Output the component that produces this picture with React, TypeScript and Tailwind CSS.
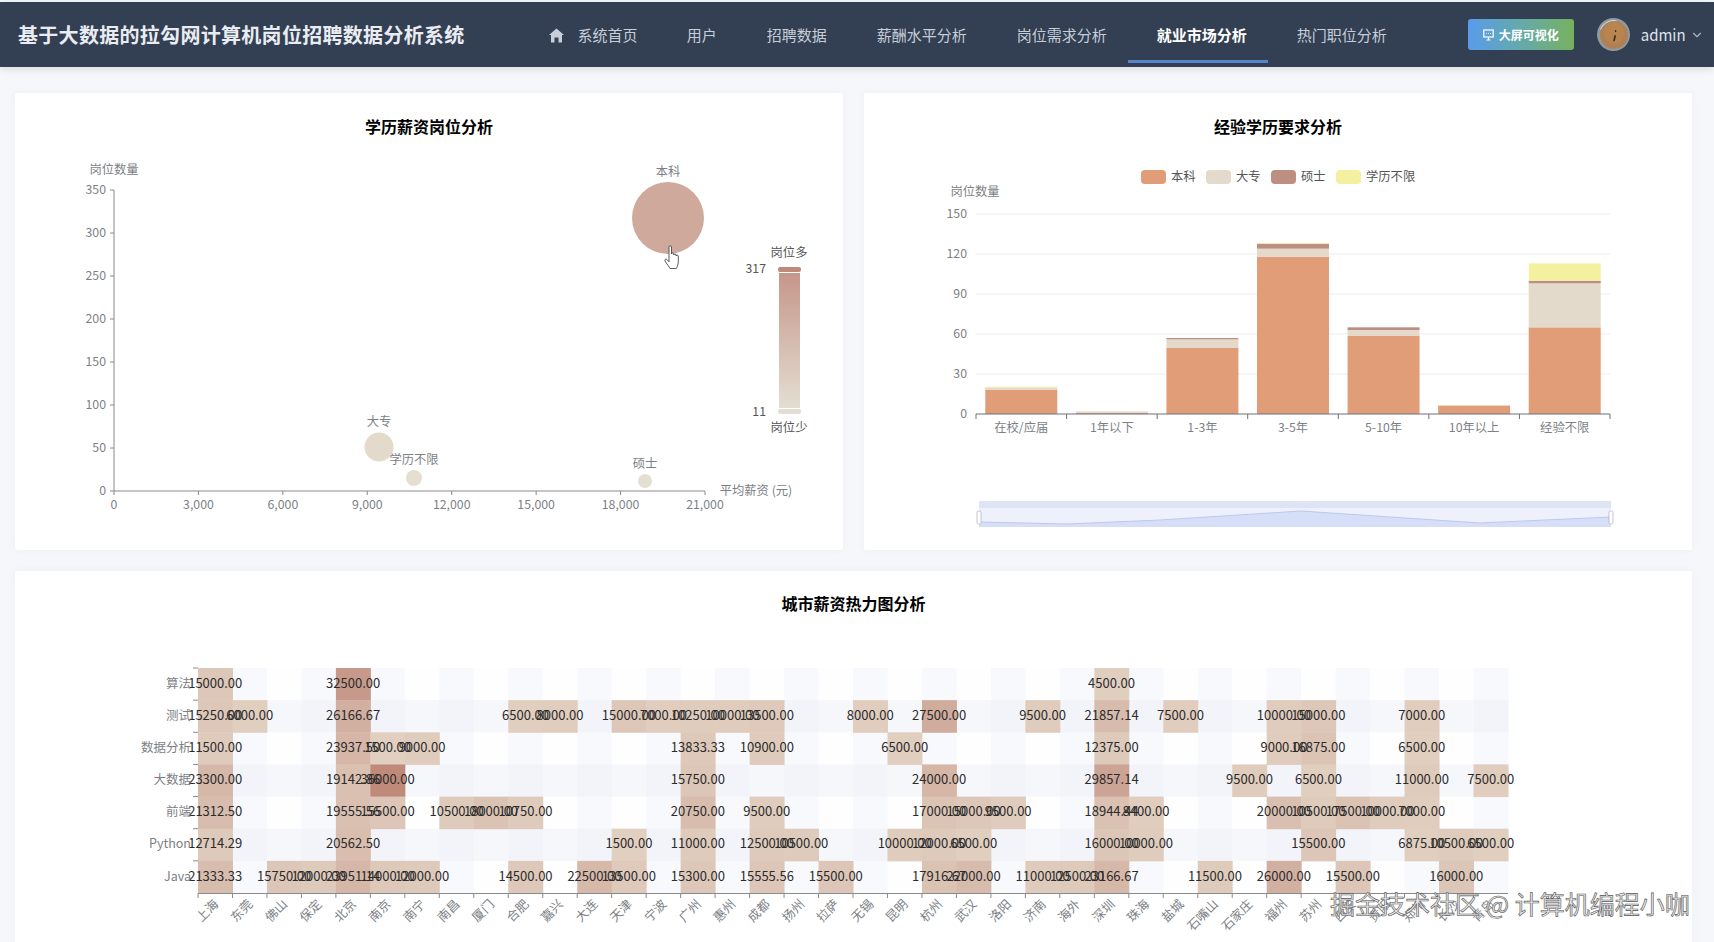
import React from 'react';
import { ChevronDown } from 'lucide-react';

const navItems = ['用户', '招聘数据', '薪酬水平分析', '岗位需求分析', '就业市场分析', '热门职位分析'];

const axisText = '#7d7f86';

const cities = ['上海','东莞','佛山','保定','北京','南京','南宁','南昌','厦门','合肥','嘉兴','大连','天津','宁波','广州','惠州','成都','扬州','拉萨','无锡','昆明','杭州','武汉','洛阳','济南','海外','深圳','珠海','盐城','石嘴山','石家庄','福州','苏州','西安','贵阳','郑州','长沙','青岛'];
const jobs = ['算法','测试','数据分析','大数据','前端','Python','Java'];

// row -> [column, salary]
const heat: [number, number][][] = [
  [[0,15000],[4,32500],[26,4500]],
  [[0,15250],[1,6000],[4,26166.67],[9,6500],[10,8000],[12,15000],[13,7000],[14,10250],[15,10000],[16,13500],[19,8000],[21,27500],[24,9500],[26,21857.14],[28,7500],[31,10000],[32,15000],[35,7000]],
  [[0,11500],[4,23937.5],[5,1500],[6,9000],[14,13833.33],[16,10900],[20,6500],[26,12375],[31,9000],[32,16875],[35,6500]],
  [[0,23300],[4,19142.86],[5,36000],[14,15750],[21,24000],[26,29857.14],[30,9500],[32,6500],[35,11000],[37,7500]],
  [[0,21312.5],[4,19555.56],[5,15500],[7,10500],[8,18000],[9,10750],[14,20750],[16,9500],[21,17000],[22,15000],[23,9500],[26,18944.44],[27,8400],[31,20000],[32,10500],[33,17500],[34,10000],[35,7000]],
  [[0,12714.29],[4,20562.5],[12,1500],[14,11000],[16,12500],[17,10500],[20,10000],[21,12000],[22,6500],[26,16000],[27,10000],[32,15500],[35,6875],[36,10500],[37,6500]],
  [[0,21333.33],[2,15750],[3,12000],[4,23951.14],[5,14000],[6,12000],[9,14500],[11,22500],[12,13500],[14,15300],[16,15555.56],[18,15500],[21,17916.67],[22,22000],[24,11000],[25,12500],[26,23166.67],[29,11500],[31,26000],[33,15500],[36,16000]],
];

const stacks = [
  { name: '在校/应届', v: [18, 2, 0, 0.5] },
  { name: '1年以下', v: [1, 1, 0, 0] },
  { name: '1-3年', v: [49.5, 6.5, 1, 0] },
  { name: '3-5年', v: [118, 6, 3.7, 0.6] },
  { name: '5-10年', v: [58.5, 4.5, 2, 0] },
  { name: '10年以上', v: [6, 0.8, 0, 0] },
  { name: '经验不限', v: [65, 33, 2, 13] },
];
const stackColors = ['#e09d77', '#e3dacb', '#bc8f82', '#f3f0a0'];

// low salaries stay pale, only the very top goes dark
const heatColor = (v: number) => {
  const t = 0.12 + 0.88 * Math.pow(v / 36000, 2.5);
  const mix = (a: number, b: number) => Math.round(a + (b - a) * t);
  return `rgb(${mix(229, 192)},${mix(216, 138)},${mix(201, 123)})`;
};

const emptyColor = (r: number, c: number) => {
  if (r % 2 && c % 2) return '#f2f4fa';
  if (r % 2) return '#f6f7fb';
  if (c % 2) return '#f7f9fd';
  return '#fefefe';
};

const BubbleChart = () => {
  const xTicks = [0, 3000, 6000, 9000, 12000, 15000, 18000, 21000];
  const yTicks = [0, 50, 100, 150, 200, 250, 300, 350];
  const x = (v: number) => 114 + (v / 21000) * 591;
  const y = (v: number) => 491 - (v / 350) * 301;
  return (
    <svg width="828" height="412" viewBox="15 138 828 412" fontSize="12.3" fill={axisText}>
      <defs>
        <linearGradient id="vm" x1="0" y1="0" x2="0" y2="1">
          <stop offset="0" stopColor="#c6968a" />
          <stop offset="1" stopColor="#e4dfd3" />
        </linearGradient>
      </defs>
      <text x="114" y="174" textAnchor="middle">岗位数量</text>
      <line x1="114" y1="190" x2="114" y2="491" stroke="#8a8a8a" />
      <line x1="114" y1="491" x2="705" y2="491" stroke="#8a8a8a" />
      {yTicks.map((t) => (
        <g key={t}>
          <line x1="110" x2="114" y1={y(t)} y2={y(t)} stroke="#8a8a8a" />
          <text x="106" y={y(t) + 4} textAnchor="end">{t}</text>
        </g>
      ))}
      {xTicks.map((t) => (
        <g key={t}>
          <line x1={x(t)} x2={x(t)} y1="491" y2="495" stroke="#8a8a8a" />
          <text x={x(t)} y="509" textAnchor="middle">{t.toLocaleString('en-US')}</text>
        </g>
      ))}
      <text x="756" y="495" textAnchor="middle">平均薪资 (元)</text>

      <circle cx="668" cy="218" r="36" fill="#cfa99b" />
      <circle cx="379" cy="447" r="14.5" fill="#e3dacb" />
      <circle cx="414" cy="478" r="8" fill="#e4dfd0" />
      <circle cx="645" cy="481" r="7" fill="#e4dfd0" />
      <text x="668" y="176" textAnchor="middle">本科</text>
      <text x="379" y="426" textAnchor="middle">大专</text>
      <text x="414" y="464" textAnchor="middle">学历不限</text>
      <text x="645" y="468" textAnchor="middle">硕士</text>

      {/* hand cursor */}
      <path
        d="M669 247c0-1.500 2.500-1.500 2.500 0v7c0-1.300 2.300-1.300 2.300 0v1c0-1.300 2.300-1.300 2.300 0v1c0-1.200 2.200-1.200 2.200 0v6c0 3-1.500 5-2 6.500h-6.300c-1-2-3.500-5-5-7.500-.8-1.500 1-2.500 2.200-1.200l1.800 2z"
        fill="#fff"
        stroke="#333"
        strokeWidth="0.8"
      />

      <text x="789" y="257" textAnchor="middle" fill="#555">岗位多</text>
      <rect x="779" y="273" width="21" height="138" fill="url(#vm)" />
      <rect x="778" y="267" width="23" height="5" rx="2" fill="#bd8b7c" />
      <rect x="778" y="409" width="23" height="5" rx="2" fill="#e2dfd2" />
      <line x1="779" x2="800" y1="408.500" y2="408.500" stroke="#fff" />
      <text x="766" y="273" textAnchor="end" fill="#555">317</text>
      <text x="766" y="416" textAnchor="end" fill="#555">11</text>
      <text x="789" y="432" textAnchor="middle" fill="#555">岗位少</text>
    </svg>
  );
};

const StackChart = () => {
  const y = (v: number) => 414 - v * (200 / 150);
  const bw = 634 / 7;
  const legend = [
    ['本科', 1141, stackColors[0]],
    ['大专', 1206, stackColors[1]],
    ['硕士', 1271, stackColors[2]],
    ['学历不限', 1336, stackColors[3]],
  ] as const;
  return (
    <svg width="828" height="412" viewBox="864 138 828 412" fontSize="12.3" fill={axisText}>
      {legend.map(([name, lx, color]) => (
        <g key={name}>
          <rect x={lx} y="170" width="25" height="14" rx="4" fill={color} />
          <text x={lx + 30} y="180.500" fill="#555">{name}</text>
        </g>
      ))}
      <text x="975" y="196" textAnchor="middle">岗位数量</text>
      {[0, 30, 60, 90, 120, 150].map((t) => (
        <g key={t}>
          {t > 0 && <line x1="976" x2="1610" y1={y(t)} y2={y(t)} stroke="#ececee" />}
          <text x="967" y={y(t) + 3.5} textAnchor="end">{t}</text>
        </g>
      ))}
      {stacks.map((s, i) => {
        const left = 976 + bw * i + (bw - 72) / 2;
        let base = 0;
        return (
          <g key={s.name}>
            {s.v.map((val, k) => {
              const top = base + val;
              const el = <rect key={k} x={left} y={y(top)} width="72" height={val * (200 / 150)} fill={stackColors[k]} />;
              base = top;
              return el;
            })}
            <text x={976 + bw * i + bw / 2} y="432" textAnchor="middle">{s.name}</text>
          </g>
        );
      })}
      <line x1="976" x2="1610" y1="414" y2="414" stroke="#6e7079" />
      {Array.from({ length: 8 }).map((_, i) => (
        <line key={i} x1={976 + bw * i} x2={976 + bw * i} y1="414" y2="419" stroke="#6e7079" />
      ))}

      {/* data zoom */}
      <rect x="979" y="501" width="632" height="7" fill="#dfe4f5" />
      <rect x="979" y="508" width="632" height="19" fill="#eef1fc" />
      <path d="M979 522L1068 524L1160 520L1301 511L1480 523L1611 517V527H979Z" fill="#d7dff8" />
      <path d="M979 522L1068 524L1160 520L1301 511L1480 523L1611 517" fill="none" stroke="#bcc8ee" />
      <rect x="977" y="511" width="4" height="13" rx="1.500" fill="#fff" stroke="#a8aebd" strokeWidth="0.7" />
      <rect x="1609" y="511" width="4" height="13" rx="1.500" fill="#fff" stroke="#a8aebd" strokeWidth="0.7" />
    </svg>
  );
};

const HeatMap = () => {
  const left = 198;
  const top = 668;
  const cw = 1310 / 38;
  const ch = 225 / 7;
  const textY = (r: number) => 683 + r * 32.17 + 4.5;
  const cells: React.ReactNode[] = [];
  const labels: React.ReactNode[] = [];
  jobs.forEach((_, r) => {
    cities.forEach((_c, c) => {
      cells.push(<rect key={`${r}-${c}`} x={left + c * cw} y={top + r * ch} width={cw + 0.5} height={ch + 0.5} fill={emptyColor(r, c)} />);
    });
  });
  heat.forEach((row, r) => {
    row.forEach(([c, v]) => {
      cells.push(<rect key={`v${r}-${c}`} x={left + c * cw} y={top + r * ch} width={cw + 0.5} height={ch + 0.5} fill={heatColor(v)} />);
      labels.push(
        <text key={`t${r}-${c}`} x={left + c * cw + cw / 2} y={textY(r)} textAnchor="middle" fill="#2b2b2b">
          {v.toFixed(2)}
        </text>
      );
    });
  });
  return (
    <svg width="1677" height="327" viewBox="15 615 1677 327" fontSize="13" fill={axisText}>
      {cells}
      {labels}
      {jobs.map((j, r) => (
        <g key={j}>
          <line x1="193" x2="198" y1={top + r * ch} y2={top + r * ch} stroke="#8a8a8a" />
          <text x="191" y={textY(r)} textAnchor="end" fontSize="12.5">{j}</text>
        </g>
      ))}
      <line x1={left} x2={left + 1310} y1="893.500" y2="893.500" stroke="#8a8a8a" />
      {cities.map((name, c) => (
        <g key={name}>
          <line x1={left + c * cw} x2={left + c * cw} y1="893" y2="898" stroke="#8a8a8a" />
          <text
            x={left + c * cw + cw / 2 + 4}
            y="905"
            textAnchor="end"
            transform={`rotate(-45 ${left + c * cw + cw / 2 + 4} 905)`}
            fontSize="12.5"
          >
            {name}
          </text>
        </g>
      ))}
    </svg>
  );
};

const HomeIcon = () => (
  <svg width="15" height="15" viewBox="0 0 15 15" fill="#c6ced9">
    <path d="M7.500 0.500L15 7H13V14.500H9.500V9.500H5.500V14.500H2V7H0Z" />
  </svg>
);

const ScreenIcon = () => (
  <svg width="11" height="12" viewBox="0 0 11 12" fill="none" stroke="#fff" strokeWidth="1.200">
    <rect x="0.800" y="1" width="9.400" height="7" />
    <path d="M5.500 8V11M3.500 11H7.500" />
    <path d="M3 4.500H3.800M5.100 4.500H5.900M7.200 4.500H8" />
  </svg>
);

const Avatar = () => (
  <svg width="33" height="33" viewBox="0 0 33 33">
    <circle cx="16.500" cy="16.500" r="16.500" fill="#8f9aa3" />
    <path d="M3 12A14.500 14.500 0 0 1 20 2.500L12 8Z" fill="#d3dbe0" />
    <circle cx="17" cy="17" r="14" fill="#b08054" />
    <ellipse cx="17" cy="15" rx="10" ry="11" fill="#b8844f" />
    <path d="M18 12h1.200v2H18zM17.500 17l1.500 .500-1 5-2 1z" fill="#3a2a20" />
  </svg>
);

const Card = ({ title, className, children }: { title: string; className: string; children: React.ReactNode }) => (
  <div className={`bg-white rounded-[2px] shadow-[0_0_8px_rgba(0,0,0,0.04)] ${className}`}>
    <h2 className="text-center text-[16px] leading-[22px] font-bold text-black">{title}</h2>
    {children}
  </div>
);

export default function App() {
  return (
    <div className="relative w-[1714px] h-[942px] overflow-hidden bg-[#f5f7fa] font-['Noto_Sans_CJK_SC',sans-serif]">
      <header className="mt-[2px] h-[65px] bg-[#333f52] flex items-center pl-[18px] shadow-[0_2px_8px_rgba(0,0,0,0.12)]">
        <h1 className="text-[20px] font-bold text-[#e9edf2] tracking-[0.3px] whitespace-nowrap">基于大数据的拉勾网计算机岗位招聘数据分析系统</h1>
        <nav className="flex h-full ml-[59px] text-[15px] text-[#c6ced9]">
          <div className="flex items-center gap-[14px] pl-[25px] pr-[24px] pt-[2px]">
            <HomeIcon />
            <span>系统首页</span>
          </div>
          {navItems.map((item) => (
            <div
              key={item}
              className={
                item === '就业市场分析'
                  ? 'flex items-center self-start h-[61px] ml-[-4px] mr-[4px] pl-[29px] pr-[21px] pt-[9px] font-bold text-white border-b-[3px] border-[#5585ca]'
                  : 'flex items-center px-[25px] pt-[2px]'
              }
            >
              {item}
            </div>
          ))}
        </nav>
        <button className="ml-[56px] w-[106px] h-[31px] rounded-[3px] bg-gradient-to-r from-[#5a9bea] to-[#77b15b] flex items-center justify-center gap-[5px] text-[12px] font-bold text-white">
          <ScreenIcon />
          大屏可视化
        </button>
        <div className="ml-[23px] flex items-center">
          <Avatar />
          <span className="ml-[11px] text-[15px] text-[#dfe4ea] pt-[1px]">admin</span>
          <ChevronDown className="ml-[4px] text-[#aab3bf]" size={14} />
        </div>
      </header>

      <main className="pl-[15px] pr-[22px] pt-[26px] flex flex-col gap-[21px]">
        <div className="flex gap-[21px]">
          <Card title="学历薪资岗位分析" className="w-[828px] h-[457px] pt-[22px] [&>svg]:mt-[1px]">
            <BubbleChart />
          </Card>
          <Card title="经验学历要求分析" className="w-[828px] h-[457px] pt-[22px] [&>svg]:mt-[1px]">
            <StackChart />
          </Card>
        </div>
        <Card title="城市薪资热力图分析" className="h-[400px] pt-[21px] [&>svg]:mt-[1px]">
          <HeatMap />
        </Card>
      </main>

      <div className="absolute left-[1330px] top-[886px] text-[25px] leading-[34px] text-[#e8e8e8] whitespace-nowrap [-webkit-text-stroke:0.6px_#555]">
        掘金技术社区 @ 计算机编程小咖
      </div>
    </div>
  );
}
